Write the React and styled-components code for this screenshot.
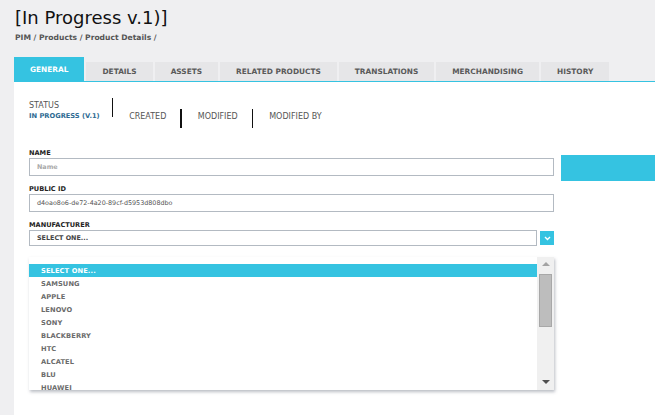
import React from "react";
import styled, { createGlobalStyle } from "styled-components";

const Global = createGlobalStyle`
  html, body { margin: 0; padding: 0; }
  body {
    background: #efeff1;
    font-family: "DejaVu Sans", "Liberation Sans", sans-serif;
    color: #444;
  }
  * { box-sizing: border-box; }
`;

const CYAN = "#35c3e1";

const Page = styled.div`
  width: 655px;
  height: 415px;
  overflow: hidden;
  display: flex;
  flex-direction: column;
`;

const Header = styled.header`
  padding: 5px 0 0 15px;
`;

const Title = styled.h1`
  margin: 0;
  font-size: 18px;
  font-weight: 400;
  line-height: 26px;
  color: #111;
`;

const Breadcrumb = styled.div`
  margin-top: 2px;
  font-size: 7.6px;
  font-weight: 700;
  color: #555;
  line-height: 10px;
`;

const Tabs = styled.nav`
  margin-top: 14px;
  margin-left: 14px;
  display: flex;
  align-items: flex-end;
  gap: 2px;
  border-bottom: 1.5px solid ${CYAN};
`;

const Tab = styled.div`
  height: ${(p) => (p.$active ? 24 : 19)}px;
  padding: 0 16px;
  display: flex;
  align-items: center;
  background: ${(p) => (p.$active ? CYAN : "#e6e6e8")};
  color: ${(p) => (p.$active ? "#fff" : "#5a5a5a")};
  font-size: 7.4px;
  font-weight: 700;
  white-space: nowrap;
`;

const Panel = styled.main`
  flex: 1;
  margin-left: 14px;
  background: #fff;
  padding: 16px 0 0 15px;
`;

const MetaRow = styled.div`
  display: flex;
  align-items: flex-start;
`;

const StatusBlock = styled.div`
  margin-top: 3px;
  margin-right: 12px;
  display: flex;
  flex-direction: column;
`;

const MetaLabel = styled.span`
  font-size: 8px;
  line-height: 10px;
  color: #555;
  white-space: nowrap;
  margin-top: ${(p) => p.$top || 0}px;
  margin-left: ${(p) => p.$left || 0}px;
  margin-right: ${(p) => p.$right || 0}px;
`;

const StatusValue = styled.span`
  font-size: 6.7px;
  line-height: 11px;
  font-weight: 700;
  color: #2d6a92;
  white-space: nowrap;
`;

const Divider = styled.span`
  width: 1.5px;
  height: 19px;
  background: #111;
  margin-top: ${(p) => p.$top || 0}px;
`;

const FormRow = styled.div`
  display: flex;
  align-items: flex-start;
  gap: 7px;
  margin-top: 21px;
`;

const Fields = styled.div`
  width: 525px;
  display: flex;
  flex-direction: column;
`;

const SideBar = styled.div`
  flex: 1;
  height: 26px;
  margin-top: 6px;
  background: ${CYAN};
`;

const Field = styled.div`
  display: flex;
  flex-direction: column;
  margin-bottom: ${(p) => p.$gap ?? 9}px;
`;

const Label = styled.label`
  font-size: 6.6px;
  font-weight: 700;
  color: #222;
  line-height: 8px;
  margin-bottom: 1px;
`;

const Input = styled.div`
  height: 18px;
  border: 1px solid #b3bac2;
  padding: 0 7px;
  display: flex;
  align-items: center;
  font-size: 6.4px;
  color: ${(p) => (p.$placeholder ? "#a9a9a9" : "#555")};
  font-weight: ${(p) => (p.$placeholder ? 700 : 400)};
`;

const SelectRow = styled.div`
  display: flex;
  align-items: center;
  gap: 3px;
`;

const SelectBox = styled.div`
  flex: 1;
  height: 16px;
  border: 1px solid #b3bac2;
  padding: 0 7px;
  display: flex;
  align-items: center;
  font-size: 6.4px;
  font-weight: 700;
  color: #444;
`;

const DropButton = styled.div`
  width: 14px;
  height: 14px;
  background: ${CYAN};
  display: flex;
  align-items: center;
  justify-content: center;
`;

const ListBox = styled.div`
  margin-top: 11px;
  width: 525px;
  height: 133px;
  display: flex;
  background: #fff;
  box-shadow: 1px 2px 3px rgba(60, 70, 90, 0.35);
`;

const Options = styled.ul`
  flex: 1;
  margin: 0;
  padding: 7px 0 0;
  list-style: none;
  overflow: hidden;
`;

const Option = styled.li`
  height: 13px;
  padding-left: 12px;
  display: flex;
  align-items: center;
  font-size: 6.7px;
  font-weight: 700;
  letter-spacing: 0.1px;
  white-space: nowrap;
  background: ${(p) => (p.$selected ? CYAN : "transparent")};
  color: ${(p) => (p.$selected ? "#fff" : "#6b6b6b")};
`;

const Scrollbar = styled.div`
  width: 17px;
  background: #f0f0f0;
  display: flex;
  flex-direction: column;
  align-items: center;
  padding: 5px 0 6px;
`;

const Arrow = styled.div`
  width: 0;
  height: 0;
  border-left: 4px solid transparent;
  border-right: 4px solid transparent;
  ${(p) =>
    p.$down
      ? `border-top: 4px solid #505050;`
      : `border-bottom: 4px solid #a3a3a3;`}
`;

const Thumb = styled.div`
  width: 13px;
  height: 53px;
  margin-top: 8px;
  background: #bdbdbd;
  border: 1px solid #a8a8a8;
`;

const Spacer = styled.div`
  flex: 1;
`;

const tabs = [
  "GENERAL",
  "DETAILS",
  "ASSETS",
  "RELATED PRODUCTS",
  "TRANSLATIONS",
  "MERCHANDISING",
  "HISTORY",
];

const options = [
  "SELECT ONE...",
  "SAMSUNG",
  "APPLE",
  "LENOVO",
  "SONY",
  "BLACKBERRY",
  "HTC",
  "ALCATEL",
  "BLU",
  "HUAWEI",
];

export default function App() {
  return (
    <Page>
      <Global />
      <Header>
        <Title>[In Progress v.1)]</Title>
        <Breadcrumb>PIM / Products / Product Details /</Breadcrumb>
      </Header>
      <Tabs>
        {tabs.map((t, i) => (
          <Tab key={t} $active={i === 0}>
            {t}
          </Tab>
        ))}
      </Tabs>
      <Panel>
        <MetaRow>
          <StatusBlock>
            <MetaLabel>STATUS</MetaLabel>
            <StatusValue>IN PROGRESS (V.1)</StatusValue>
          </StatusBlock>
          <Divider />
          <MetaLabel $top={14} $left={16} $right={14}>
            CREATED
          </MetaLabel>
          <Divider $top={11} />
          <MetaLabel $top={14} $left={16} $right={14}>
            MODIFIED
          </MetaLabel>
          <Divider $top={11} />
          <MetaLabel $top={14} $left={16}>
            MODIFIED BY
          </MetaLabel>
        </MetaRow>
        <FormRow>
          <Fields>
            <Field>
              <Label>NAME</Label>
              <Input $placeholder>Name</Input>
            </Field>
            <Field>
              <Label>PUBLIC ID</Label>
              <Input>d4oao8o6-de72-4a20-89cf-d5953d808dbo</Input>
            </Field>
            <Field $gap={0}>
              <Label>MANUFACTURER</Label>
              <SelectRow>
                <SelectBox>SELECT ONE...</SelectBox>
                <DropButton>
                  <svg width="7" height="5" viewBox="0 0 7 5">
                    <path
                      d="M1 1 L3.5 3.5 L6 1"
                      fill="none"
                      stroke="#fff"
                      strokeWidth="1.4"
                    />
                  </svg>
                </DropButton>
              </SelectRow>
            </Field>
            <ListBox>
              <Options>
                {options.map((o, i) => (
                  <Option key={o} $selected={i === 0}>
                    {o}
                  </Option>
                ))}
              </Options>
              <Scrollbar>
                <Arrow />
                <Thumb />
                <Spacer />
                <Arrow $down />
              </Scrollbar>
            </ListBox>
          </Fields>
          <SideBar />
        </FormRow>
      </Panel>
    </Page>
  );
}
